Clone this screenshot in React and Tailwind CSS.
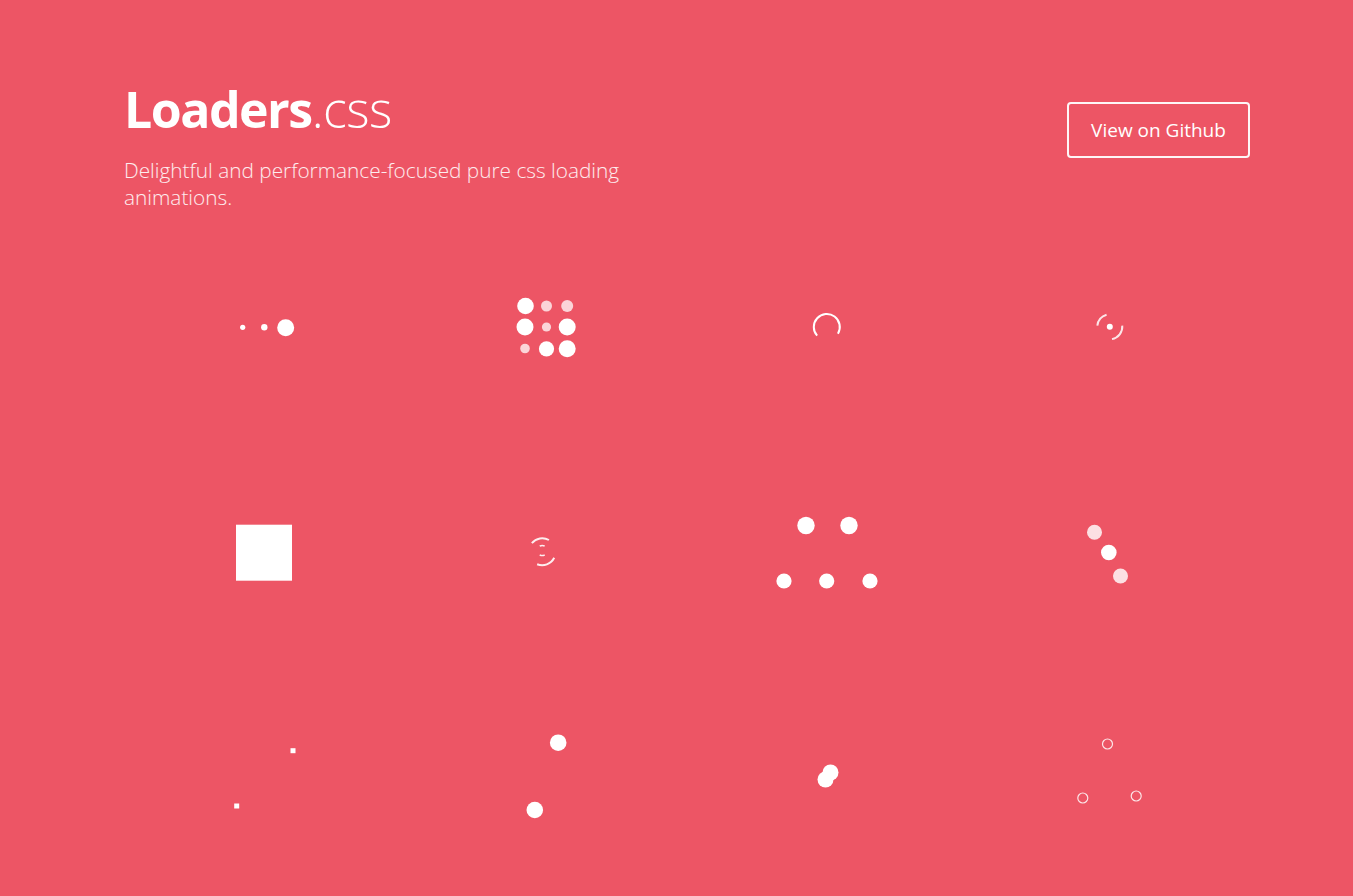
import React from "react";

function pt(cx, cy, r, a) {
  const t = (a * Math.PI) / 180;
  return [cx + r * Math.cos(t), cy + r * Math.sin(t)];
}
function arc(cx, cy, r, a1, a2) {
  let span = a2 - a1;
  while (span < 0) span += 360;
  const [x1, y1] = pt(cx, cy, r, a1);
  const [x2, y2] = pt(cx, cy, r, a1 + span);
  const large = span > 180 ? 1 : 0;
  return `M ${x1} ${y1} A ${r} ${r} 0 ${large} 1 ${x2} ${y2}`;
}

const W = "#ffffff";

const loaders = [
  // 1 ball-pulse
  <g key="1" fill={W}>
    <circle cx="242.7" cy="327.3" r="2.6" />
    <circle cx="264.3" cy="327.3" r="3.2" />
    <circle cx="285.7" cy="327.8" r="8.5" />
  </g>,
  // 2 ball-grid-pulse
  <g key="2" fill={W}>
    <circle cx="525" cy="306" r="8.3" />
    <circle cx="546" cy="306" r="5.5" opacity="0.75" />
    <circle cx="566.7" cy="306" r="6" opacity="0.75" />
    <circle cx="524.5" cy="327" r="8.5" />
    <circle cx="546" cy="327" r="4.6" opacity="0.75" />
    <circle cx="566.7" cy="327" r="8.5" />
    <circle cx="524.5" cy="348.5" r="4.8" opacity="0.75" />
    <circle cx="546" cy="348.8" r="7.6" />
    <circle cx="566.7" cy="348.8" r="8.5" />
  </g>,
  // 3 ball-clip-rotate
  <g key="3" fill="none" stroke={W} strokeWidth="2">
    <path d={arc(826.8, 327, 13, 138, 31)} />
  </g>,
  // 4 ball-clip-rotate-pulse
  <g key="4">
    <circle cx="1109.3" cy="326.8" r="3" fill={W} />
    <g fill="none" stroke={W} strokeWidth="2" opacity="0.85">
      <path d={arc(1109.3, 326.8, 12.5, 185, 255)} />
      <path d={arc(1109.3, 326.8, 12.5, 355, 80)} />
    </g>
  </g>,
  // 5 square-spin
  <g key="5" fill={W}>
    <rect x="236" y="524.7" width="56" height="56" />
  </g>,
  // 6 ball-clip-rotate-multiple
  <g key="6" fill="none" stroke={W} strokeWidth="2" opacity="0.9">
    <path d={arc(541.7, 551.7, 13.5, 220, 300)} />
    <path d={arc(541.7, 551.7, 13.5, 27, 112)} />
    <path d={arc(541.7, 550.5, 5, 240, 300)} strokeWidth="1.6" />
    <path d={arc(541.7, 550.5, 5, 60, 120)} strokeWidth="1.6" />
  </g>,
  // 7 ball-pulse-rise
  <g key="7" fill={W}>
    <circle cx="806" cy="525.5" r="8.7" />
    <circle cx="849" cy="525.5" r="8.7" />
    <circle cx="784" cy="581" r="7.6" />
    <circle cx="826.7" cy="581" r="7.6" />
    <circle cx="870" cy="581" r="7.6" />
  </g>,
  // 8 diagonal dots
  <g key="8" fill={W}>
    <circle cx="1094" cy="532.3" r="7.5" opacity="0.82" />
    <circle cx="1108.3" cy="552.5" r="7.8" />
    <circle cx="1120" cy="576" r="7.5" opacity="0.82" />
  </g>,
  // 9 small squares
  <g key="9" fill={W}>
    <rect x="234.2" y="803.5" width="5" height="5" />
    <rect x="290.5" y="748.2" width="5" height="5" />
  </g>,
  // 10 two balls
  <g key="10" fill={W}>
    <circle cx="557.7" cy="742.7" r="8.3" />
    <circle cx="534.3" cy="810" r="8.3" />
  </g>,
  // 11 overlapping balls
  <g key="11" fill={W}>
    <circle cx="830.5" cy="772.5" r="8" />
    <circle cx="825.5" cy="779.5" r="8" />
  </g>,
  // 12 ball-triangle-path
  <g key="12" fill="none" stroke={W} strokeWidth="1.2" opacity="0.85">
    <circle cx="1107" cy="744" r="5" />
    <circle cx="1082.3" cy="798" r="5" />
    <circle cx="1135.7" cy="796" r="5" />
  </g>,
];

export default function App() {
  return (
    <div
      className="min-h-[896px] w-full bg-[#ed5565] text-white"
      style={{ fontFamily: '"Open Sans", "Noto Sans", sans-serif' }}
    >
      <div className="ml-[124px] w-[1126px]">
        <header className="flex h-[215px] items-start justify-between pt-[79px]">
          <div>
            <h1 className="text-[50px] leading-[60px] tracking-[-1.5px]">
              <span className="font-bold">Loaders</span>
              <span className="font-light tracking-[-0.5px]">.css</span>
            </h1>
            <p className="mt-[18px] w-[520px] text-[20.8px] font-light leading-[27px] text-white/90">
              Delightful and performance-focused pure css loading animations.
            </p>
          </div>
          <a
            href="#"
            className="mt-[23px] flex h-[56px] w-[183px] items-center justify-center rounded-[4px] border-2 border-white/95 text-[19px] text-white"
          >
            View on Github
          </a>
        </header>
        <div className="grid grid-cols-4">
          {loaders.map((l, i) => {
            const col = i % 4;
            const row = Math.floor(i / 4);
            const ox = 124 + col * 281.5;
            const oy = 215 + row * 225;
            return (
              <div key={i} className="h-[225px]">
                <svg
                  width="281.5"
                  height="225"
                  viewBox={`${ox} ${oy} 281.5 225`}
                  className="block"
                >
                  {l}
                </svg>
              </div>
            );
          })}
        </div>
      </div>
    </div>
  );
}
